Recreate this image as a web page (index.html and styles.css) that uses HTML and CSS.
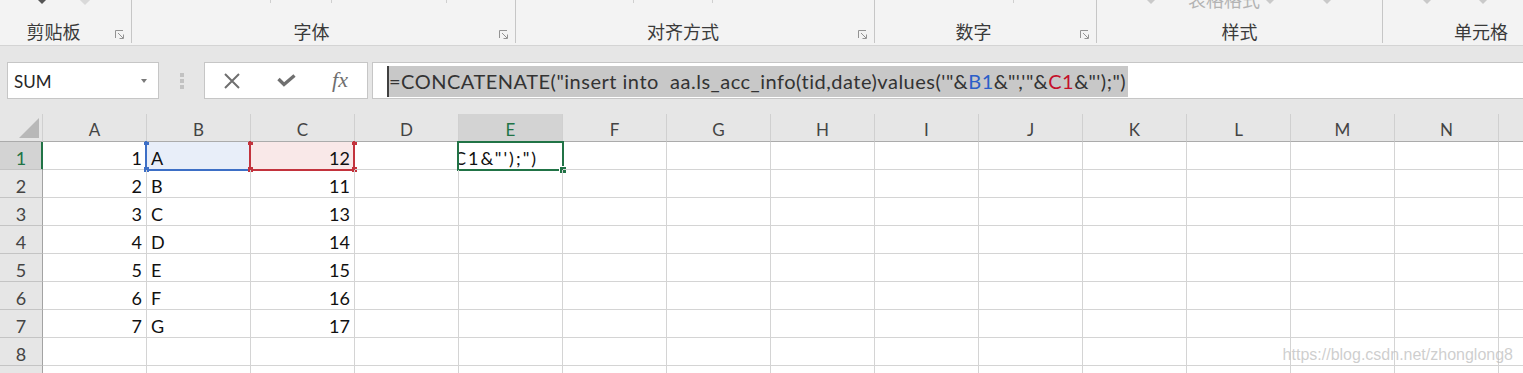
FILE: index.html
```html
<!DOCTYPE html>
<html lang="zh-CN">
<head>
  <meta charset="UTF-8" />
  <title>Excel - CONCATENATE</title>
  <link rel="stylesheet" href="styles.css">
</head>
<body>
  <!-- ribbon, only the bottom strip is visible -->
  <div class="ribbon">
    <div class="group g1">
      <div class="cut"><span class="tri dark m38"></span><span class="diamond"></span></div>
      <div class="foot"><span class="label">剪贴板</span><svg class="launcher" viewBox="0 0 9 9"><path d="M0.5 8V0.5H8M3 3L8 8M4.5 8.5H8.5V4.5"/></svg></div>
    </div>
    <div class="group g2">
      <div class="cut"><span class="tick" style="margin-left:138px"></span><span class="tick" style="margin-left:60px"></span><span class="tick" style="margin-left:114px"></span></div>
      <div class="foot"><span class="label">字体</span><svg class="launcher" viewBox="0 0 9 9"><path d="M0.5 8V0.5H8M3 3L8 8M4.5 8.5H8.5V4.5"/></svg></div>
    </div>
    <div class="group g3">
      <div class="cut"><span class="tick" style="margin-left:117px"></span><span class="tick" style="margin-left:78px"></span></div>
      <div class="foot"><span class="label">对齐方式</span><svg class="launcher" viewBox="0 0 9 9"><path d="M0.5 8V0.5H8M3 3L8 8M4.5 8.5H8.5V4.5"/></svg></div>
    </div>
    <div class="group g4">
      <div class="cut"><span class="tick" style="margin-left:138px"></span></div>
      <div class="foot"><span class="label">数字</span><svg class="launcher" viewBox="0 0 9 9"><path d="M0.5 8V0.5H8M3 3L8 8M4.5 8.5H8.5V4.5"/></svg></div>
    </div>
    <div class="group g5">
      <div class="cut"><span class="tri" style="margin-left:50px"></span><span class="faded">表格格式</span><span class="tri" style="margin-left:6px"></span><span class="tri" style="margin-left:49px"></span></div>
      <div class="foot"><span class="label">样式</span></div>
    </div>
    <div class="group g6">
      <div class="cut"><span class="tri" style="margin-left:40px"></span><span class="tri" style="margin-left:48px"></span></div>
      <div class="foot"><span class="label">单元格</span></div>
    </div>
  </div>

  <!-- name box + formula bar -->
  <div class="formula-row">
    <div class="namebox"><span>SUM</span><span class="drop"></span></div>
    <div class="grip"><i></i><i></i><i></i></div>
    <div class="fx-buttons">
      <span class="fx-btn"><svg width="16" height="16" viewBox="0 0 16 16"><path d="M1 1L15 15M15 1L1 15"/></svg></span>
      <span class="fx-btn"><svg class="ok" width="19" height="13" viewBox="0 0 19 13"><path d="M1.5 5L7 10.5L17.5 1.5"/></svg></span>
      <span class="fx-btn fx">fx</span>
    </div>
    <div class="formula-input">
      <span class="formula-text">=CONCATENATE("insert into  aa.ls_acc_info(tid,date)values('"&amp;<span class="rb">B1</span>&amp;"','"&amp;<span class="rc">C1</span>&amp;"');")</span>
    </div>
  </div>

  <!-- grid -->
  <div class="sheet">
    <div class="ch corner"><span class="corner-tri"></span></div>
    <div class="ch">A</div><div class="ch">B</div><div class="ch">C</div><div class="ch">D</div>
    <div class="ch active">E</div><div class="ch">F</div><div class="ch">G</div><div class="ch">H</div>
    <div class="ch">I</div><div class="ch">J</div><div class="ch">K</div><div class="ch">L</div>
    <div class="ch">M</div><div class="ch">N</div><div class="ch">O</div>

    <div class="rh active">1</div>
    <div class="cell num">1</div>
    <div class="cell ref-b">A<span class="ref-box blue"><i class="hd tl"></i><i class="hd bl"></i></span></div>
    <div class="cell num ref-c">12<span class="ref-box red"><i class="hd tl"></i><i class="hd tr"></i><i class="hd bl"></i><i class="hd br"></i></span></div>
    <div class="cell"></div>
    <div class="cell editing"><div class="edit-text"><span>C1&amp;"');")</span></div><span class="sel"><i class="fill-handle"></i></span></div>
    <div class="cell"></div><div class="cell"></div><div class="cell"></div><div class="cell"></div><div class="cell"></div>
    <div class="cell"></div><div class="cell"></div><div class="cell"></div><div class="cell"></div><div class="cell"></div>

    <div class="rh">2</div>
    <div class="cell num">2</div><div class="cell">B</div><div class="cell num">11</div>
    <div class="cell"></div><div class="cell"></div><div class="cell"></div><div class="cell"></div><div class="cell"></div><div class="cell"></div>
    <div class="cell"></div><div class="cell"></div><div class="cell"></div><div class="cell"></div><div class="cell"></div><div class="cell"></div>

    <div class="rh">3</div>
    <div class="cell num">3</div><div class="cell">C</div><div class="cell num">13</div>
    <div class="cell"></div><div class="cell"></div><div class="cell"></div><div class="cell"></div><div class="cell"></div><div class="cell"></div>
    <div class="cell"></div><div class="cell"></div><div class="cell"></div><div class="cell"></div><div class="cell"></div><div class="cell"></div>

    <div class="rh">4</div>
    <div class="cell num">4</div><div class="cell">D</div><div class="cell num">14</div>
    <div class="cell"></div><div class="cell"></div><div class="cell"></div><div class="cell"></div><div class="cell"></div><div class="cell"></div>
    <div class="cell"></div><div class="cell"></div><div class="cell"></div><div class="cell"></div><div class="cell"></div><div class="cell"></div>

    <div class="rh">5</div>
    <div class="cell num">5</div><div class="cell">E</div><div class="cell num">15</div>
    <div class="cell"></div><div class="cell"></div><div class="cell"></div><div class="cell"></div><div class="cell"></div><div class="cell"></div>
    <div class="cell"></div><div class="cell"></div><div class="cell"></div><div class="cell"></div><div class="cell"></div><div class="cell"></div>

    <div class="rh">6</div>
    <div class="cell num">6</div><div class="cell">F</div><div class="cell num">16</div>
    <div class="cell"></div><div class="cell"></div><div class="cell"></div><div class="cell"></div><div class="cell"></div><div class="cell"></div>
    <div class="cell"></div><div class="cell"></div><div class="cell"></div><div class="cell"></div><div class="cell"></div><div class="cell"></div>

    <div class="rh">7</div>
    <div class="cell num">7</div><div class="cell">G</div><div class="cell num">17</div>
    <div class="cell"></div><div class="cell"></div><div class="cell"></div><div class="cell"></div><div class="cell"></div><div class="cell"></div>
    <div class="cell"></div><div class="cell"></div><div class="cell"></div><div class="cell"></div><div class="cell"></div><div class="cell"></div>

    <div class="rh">8</div>
    <div class="cell"></div><div class="cell"></div><div class="cell"></div>
    <div class="cell"></div><div class="cell"></div><div class="cell"></div><div class="cell"></div><div class="cell"></div><div class="cell"></div>
    <div class="cell"></div><div class="cell"></div><div class="cell"></div><div class="cell"></div><div class="cell"></div><div class="cell"></div>

    <div class="rh">9</div>
    <div class="cell"></div><div class="cell"></div><div class="cell"></div>
    <div class="cell"></div><div class="cell"></div><div class="cell"></div><div class="cell"></div><div class="cell"></div><div class="cell"></div>
    <div class="cell"></div><div class="cell"></div><div class="cell"></div><div class="cell"></div><div class="cell"></div><div class="cell"></div>
  </div>

  <div class="watermark">https://blog.csdn.net/zhonglong8</div>
</body>
</html>
```

FILE: styles.css
```css
* { box-sizing: border-box; }
body {
  margin: 0;
  width: 1523px;
  height: 373px;
  overflow: hidden;
  position: relative;
  background: #e6e6e6;
  font-family: 'Lato', 'Noto Sans', sans-serif;
  color: #222;
}

/* ribbon */
.ribbon {
  display: flex;
  height: 46px;
  background: #f3f3f3;
  border-bottom: 1px solid #d4d4d4;
  overflow: hidden;
}
.group {
  flex-shrink: 0;
  height: 43px;
  padding-bottom: 2px;
  display: flex;
  flex-direction: column;
  justify-content: space-between;
  border-right: 1px solid #c6c6c6;
}
.g1 { width: 132px; }
.g2 { width: 384px; }
.g3 { width: 359px; }
.g4 { width: 222px; }
.g5 { width: 286px; }
.g6 { width: 196px; border-right: none; }
.cut {
  display: flex;
  align-items: flex-start;
  height: 10px;
}
.tri {
  width: 0; height: 0;
  border-left: 4px solid transparent;
  border-right: 4px solid transparent;
  border-top: 4px solid #c9c9c9;
}
.tri.dark { border-top-color: #555; }
.m38 { margin-left: 38px; }
.diamond {
  width: 10px; height: 10px;
  margin: -7px 0 0 34px;
  background: #d9d9d9;
  transform: rotate(45deg);
}
.tick {
  width: 1px; height: 3px;
  background: #cfcfcf;
}
.faded {
  margin: -11px 0 0 33px;
  font: 18px/20px 'Noto Sans CJK SC', sans-serif;
  color: #b3b3b3;
}
.foot {
  display: flex;
  align-items: center;
  height: 20px;
}
.label {
  flex: 1;
  text-align: center;
  font: 18px/20px 'Noto Sans CJK SC', sans-serif;
  color: #3a3a3a;
}
.launcher {
  width: 9px; height: 9px;
  margin: 6px 7px 0 8px;
  fill: none;
  stroke: #939393;
  stroke-width: 1;
}

/* formula bar */
.formula-row {
  display: flex;
  align-items: flex-start;
  height: 68px;
  padding-top: 16px;
}
.namebox {
  width: 152px;
  height: 37px;
  margin-left: 7px;
  display: flex;
  align-items: center;
  justify-content: space-between;
  padding: 1px 11px 0 6px;
  background: #fff;
  border: 1px solid #c6c6c6;
  font-size: 17px;
  color: #262626;
}
.drop {
  width: 0; height: 0;
  border-left: 3.5px solid transparent;
  border-right: 3.5px solid transparent;
  border-top: 4px solid #7a7a7a;
}
.grip {
  width: 45px;
  height: 37px;
  display: flex;
  flex-direction: column;
  align-items: center;
  justify-content: center;
  gap: 2px;
}
.grip i {
  width: 4px; height: 4px;
  background: #c2c2c2;
}
.fx-buttons {
  width: 164px;
  height: 37px;
  display: flex;
  background: #fff;
  border: 1px solid #c6c6c6;
}
.fx-btn {
  width: 54px;
  display: flex;
  align-items: center;
  justify-content: center;
}
.fx-btn svg {
  fill: none;
  stroke: #6f6f6f;
  stroke-width: 2;
}
.fx-btn svg.ok { stroke-width: 3.4; }
.fx {
  font: italic 22px 'Liberation Serif', 'DejaVu Serif', serif;
  color: #6f6f6f;
  padding-bottom: 2px;
}
.formula-input {
  flex: 1;
  height: 37px;
  margin: 0 -1px 0 4px;
  padding: 3px 0 0 14px;
  background: #fff;
  border: 1px solid #c6c6c6;
}
.formula-text {
  display: inline-block;
  height: 31px;
  line-height: 31px;
  padding-right: 2px;
  white-space: pre;
  background: #c8c8c8;
  border-left: 2px solid #404040;
  font-size: 20px;
  letter-spacing: 0.5px;
  color: #333;
}
.rb { color: #2b5fc8; }
.rc { color: #c4102a; }

/* sheet */
.sheet {
  display: grid;
  grid-template-columns: 43px repeat(15, 104px);
  grid-auto-rows: 28px;
  background: #fff;
}
.cell, .ch, .rh {
  position: relative;
  display: flex;
  align-items: flex-end;
  padding: 0 4px;
  line-height: 22px;
  white-space: nowrap;
  border-right: 1px solid #d4d4d4;
  border-bottom: 1px solid #d4d4d4;
  font-size: 18px;
  color: #111;
}
.num { justify-content: flex-end; }
.ch {
  justify-content: center;
  background: #e6e6e6;
  border-right-color: #d0d0d0;
  border-bottom-color: #ababab;
  font-size: 17px;
  color: #444;
}
.rh {
  justify-content: center;
  background: #e6e6e6;
  border-right-color: #a3a3a3;
  border-bottom-color: #c4c4c4;
  color: #444;
}
.ch.active, .rh.active {
  background: #d3d3d3;
  color: #217346;
}
.rh.active { box-shadow: inset -1px 0 #217346; border-right-color: #217346; }
.corner { align-items: stretch; justify-content: flex-end; padding: 4px 3px 3px 0; }
.corner-tri {
  width: 20px;
  background: #b8b8b8;
  clip-path: polygon(100% 0, 100% 100%, 0 100%);
}

/* formula references */
.ref-b { background: #e8eef9; }
.ref-c { background: #f9e8e8; }
.ref-box {
  position: absolute;
  left: -2px; top: -1px;
  width: 106px; height: 30px;
  border: 2px solid;
  border-top: none;
}
.ref-box.blue { border-color: #3d6fc6; }
.ref-box.red { border-color: #c3333d; }
.hd {
  position: absolute;
  width: 5px; height: 5px;
}
.blue .hd { background: #3d6fc6; }
.red .hd { background: #c3333d; }
.hd.tl { left: -3px; top: 1px; height: 3px; }
.hd.tr { left: 101px; top: 1px; height: 3px; }
.hd.bl { left: -3px; top: 26px; }
.hd.br { left: 101px; top: 26px; }

/* active cell in edit mode */
.editing { padding: 0; }
.edit-text {
  width: 90px;
  overflow: hidden;
  display: flex;
}
.edit-text span {
  margin-left: -5px;
  letter-spacing: 2px;
}
.sel {
  position: absolute;
  left: -2px; top: -1px;
  width: 107px; height: 30px;
  border: 2px solid #217346;
}
.fill-handle {
  position: absolute;
  right: -4px; bottom: -4px;
  width: 6px; height: 6px;
  background: #217346;
  outline: 1px solid #fff;
}

.watermark {
  position: absolute;
  right: 10px;
  bottom: 9px;
  font: 16px 'Liberation Sans', Arial, sans-serif;
  color: rgba(190, 190, 190, 0.75);
}
```
